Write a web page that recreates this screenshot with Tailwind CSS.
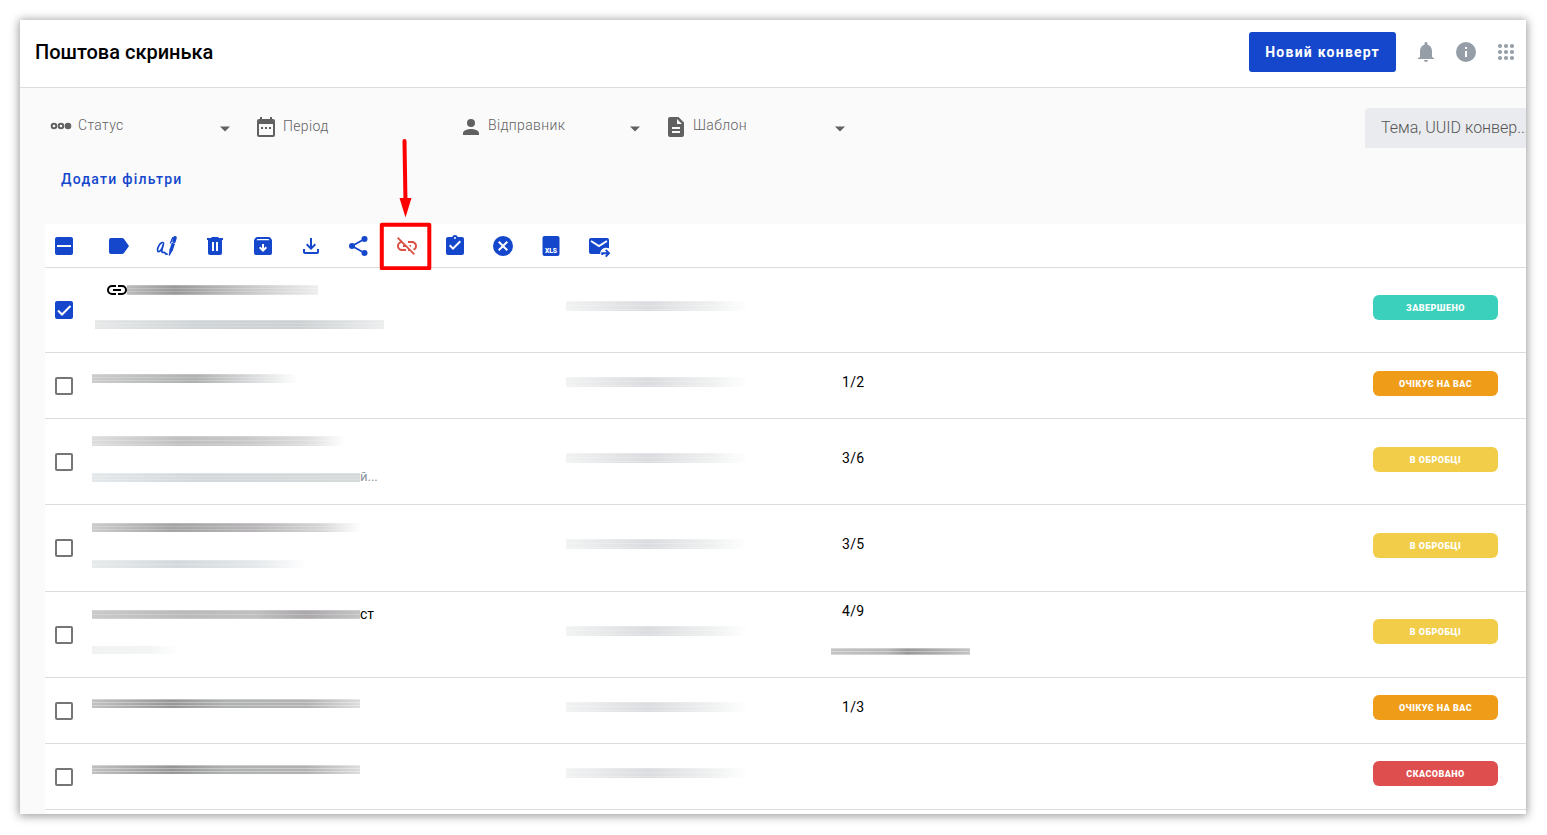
<!DOCTYPE html>
<html lang="uk">
<head>
<meta charset="utf-8">
<meta name="viewport" content="width=device-width, initial-scale=1">
<title>Поштова скринька</title>
<script src="https://cdn.jsdelivr.net/npm/@tailwindcss/browser@4"></script>
</head>
<body class="flex min-h-screen bg-white pt-5 pr-[21px] pb-[21px] pl-5 font-[Roboto,sans-serif] text-black">
<div class="flex min-w-0 flex-1 flex-col overflow-hidden bg-[#fafafa] shadow-[0_1px_9px_1px_rgba(0,0,0,0.4)]">

  <header class="flex h-17 items-center border-b border-[#dcdcdc] bg-white pr-2 pb-1 pl-[15px]">
    <h1 class="flex-1 text-xl font-medium">Поштова скринька</h1>
    <button type="button" class="mr-[18px] h-10 rounded-[3px] bg-[#1447cc] px-4 text-sm font-bold tracking-[1.25px] text-white">Новий конверт</button>
    <div class="flex gap-4 text-[#959ea7]">
      <button type="button" aria-label="Сповіщення"><svg class="block size-6" viewBox="0 0 24 24" fill="currentColor"><path d="M12 22c1.1 0 2-.9 2-2h-4c0 1.1.9 2 2 2zm6-5v-6c0-3.07-1.63-5.64-4.5-6.32V3.5c0-.83-.67-1.5-1.5-1.5s-1.5.67-1.5 1.5v1.18C7.64 5.36 6 7.92 6 11v6l-2 1v1h16v-1z"/></svg></button>
      <button type="button" aria-label="Інформація"><svg class="block size-6" viewBox="0 0 24 24" fill="currentColor"><path d="M12 2a10 10 0 1 0 0 20 10 10 0 0 0 0-20zm1 15h-2v-6h2zm0-8h-2V7h2z"/></svg></button>
      <button type="button" aria-label="Застосунки"><svg class="block size-6" viewBox="0 0 24 24" fill="currentColor"><circle cx="6" cy="6" r="2.1"/><circle cx="12" cy="6" r="2.1"/><circle cx="18" cy="6" r="2.1"/><circle cx="6" cy="12" r="2.1"/><circle cx="12" cy="12" r="2.1"/><circle cx="18" cy="12" r="2.1"/><circle cx="6" cy="18" r="2.1"/><circle cx="12" cy="18" r="2.1"/><circle cx="18" cy="18" r="2.1"/></svg></button>
    </div>
  </header>

  <main class="flex flex-1 flex-col pl-[25px]">
    <div class="flex items-center justify-between pt-5 pl-1">
      <div class="flex gap-[17px] text-sm font-light tracking-wide text-[#616161]">
        <div class="relative flex w-47 items-center gap-[5px]">
          <svg class="size-6 shrink-0" viewBox="0 0 24 24" fill="none" stroke="currentColor" stroke-width="2"><circle cx="5" cy="10" r="2.3"/><circle cx="12" cy="10" r="2.3"/><circle cx="19" cy="10" r="2.3" fill="currentColor"/></svg>
          <select aria-label="Статус" class="w-full appearance-none bg-transparent pb-1.5 outline-none"><option>Статус</option></select>
          <svg class="pointer-events-none absolute right-0 size-6" viewBox="0 0 24 24" fill="currentColor"><path d="M7 10.5l5 5 5-5z"/></svg>
        </div>
        <div class="flex w-47 items-center gap-[5px]">
          <svg class="size-6 shrink-0" viewBox="0 0 24 24" fill="currentColor"><path fill-rule="evenodd" d="M5 3h1V1h2v2h8V1h2v2h1a2 2 0 0 1 2 2v14a2 2 0 0 1-2 2H5a2 2 0 0 1-2-2V5a2 2 0 0 1 2-2zm0 5v11h14V8zM7 11h2v2H7zm4 0h2v2h-2zm4 0h2v2h-2z"/></svg>
          <input type="text" aria-label="Період" placeholder="Період" class="w-full min-w-0 bg-transparent pb-1 outline-none placeholder:text-[#616161]">
        </div>
        <div class="relative flex w-47 items-center gap-[5px]">
          <svg class="size-6 shrink-0" viewBox="0 0 24 24" fill="currentColor"><path d="M12 11a4 4 0 1 0 0-8 4 4 0 0 0 0 8zm0 2c-2.67 0-8 1.3-8 4v2h16v-2c0-2.7-5.33-4-8-4z"/></svg>
          <select aria-label="Відправник" class="w-full appearance-none bg-transparent pb-1.5 outline-none"><option>Відправник</option></select>
          <svg class="pointer-events-none absolute right-0 size-6" viewBox="0 0 24 24" fill="currentColor"><path d="M7 10.5l5 5 5-5z"/></svg>
        </div>
        <div class="relative flex w-47 items-center gap-[5px]">
          <svg class="size-6 shrink-0" viewBox="0 0 24 24" fill="currentColor"><path fill-rule="evenodd" d="M6 1h8.500l5.500 5.500V19a2 2 0 0 1-2 2H6a2 2 0 0 1-2-2V3a2 2 0 0 1 2-2zm2 10v2h8v-2zm0 4v2h8v-2zm5-12v5h5z"/></svg>
          <select aria-label="Шаблон" class="w-full appearance-none bg-transparent pb-1.5 outline-none"><option>Шаблон</option></select>
          <svg class="pointer-events-none absolute right-0 size-6" viewBox="0 0 24 24" fill="currentColor"><path d="M7 10.5l5 5 5-5z"/></svg>
        </div>
      </div>
      <input type="search" aria-label="Пошук" placeholder="Тема, UUID конвер..." class="-mr-5 h-10 w-[181px] rounded-t bg-[#e9ebee] pb-0.5 pl-4 text-base font-light outline-none placeholder:text-[#555]">
    </div>

    <div class="flex h-19 items-center pb-3.5 pl-4">
      <button type="button" class="text-sm font-medium tracking-[1.25px] text-[#1447cc]">Додати фільтри</button>
    </div>

    <section class="flex-1 rounded-tl bg-white">
      <div class="flex h-11 items-center border-b border-[#dcdcdc] pl-2.5 text-[#1447cc]">
        <label class="relative mr-[34px] block size-4.5">
          <input type="checkbox" aria-label="Вибрати всі" class="block size-4.5 appearance-none rounded-xs bg-[#1447cc]">
          <svg class="pointer-events-none absolute inset-0 size-4.5" viewBox="0 0 18 18" stroke="#fff" stroke-width="2"><path d="M2 9h14"/></svg>
        </label>
        <div class="flex gap-6">
          <button type="button" aria-label="Мітка"><svg class="block size-6" viewBox="0 0 24 24" fill="currentColor"><path d="M4 4h11c.8 0 1.500.3 2 1l5 7-5 7c-.5.700-1.200 1-2 1H4a2 2 0 0 1-2-2V6a2 2 0 0 1 2-2z"/></svg></button>
          <button type="button" aria-label="Підписати"><svg class="block size-6" viewBox="0 0 24 24" fill="none" stroke="currentColor" stroke-linecap="round"><path stroke-width="1.700" stroke-linejoin="round" d="M8.600 9.300C8 7.500 5.400 8.800 3.800 11.800c-1.400 2.600-1.800 5.600-.3 5.800 1.600.1 3.700-3 4.900-7-.9 2.900-2 6.400-1.400 7.600.5.900 1.700-.4 2.500.2.700.6.600 1.700 2.600 1.800"/><path stroke-width="3.600" d="M20 3.800l-1 3.400"/><path stroke-width="3.400" stroke-linecap="butt" d="M18.400 9.200l-2.400 7.300"/><path fill="currentColor" stroke="none" d="M14.500 15.500l3.100.9-3 5.400-.9-.3z"/><path stroke-width="1.300" d="M17.700 3.600l-2.200 5.400"/></svg></button>
          <button type="button" aria-label="Видалити"><svg class="block size-6" viewBox="0 0 24 24" fill="currentColor"><path fill-rule="evenodd" d="M9 3h6l1 1h4v2h-1v13a2 2 0 0 1-2 2H7a2 2 0 0 1-2-2V6H4V4h4zm0 5v9h2V8zm4 0v9h2V8z"/></svg></button>
          <button type="button" aria-label="Архівувати"><svg class="block size-6" viewBox="0 0 24 24"><path fill="currentColor" d="M6 3h12c.5 0 .9.200 1.200.600l1.300 1.600c.3.400.5.800.5 1.300V19a2 2 0 0 1-2 2H5a2 2 0 0 1-2-2V6.500c0-.5.200-.9.500-1.300l1.300-1.600C5.100 3.200 5.500 3 6 3z"/><path fill="#fff" d="M6.400 5h11.200l.9 1.200h-13zM11 10h2v4.200l1.600-1.600L16 14l-4 4-4-4 1.400-1.400 1.600 1.600z"/></svg></button>
          <button type="button" aria-label="Завантажити"><svg class="block size-6" viewBox="0 0 24 24" fill="currentColor"><path d="M12 16l-5-5 1.400-1.450L11 12.150V4h2v8.150l2.600-2.600L17 11zM6 20a2 2 0 0 1-2-2v-3h2v3h12v-3h2v3a2 2 0 0 1-2 2z"/></svg></button>
          <button type="button" aria-label="Поділитися"><svg class="block size-6" viewBox="0 0 24 24" fill="currentColor"><path fill="none" stroke="currentColor" stroke-width="1.800" d="M17.500 5L5 12l12.500 7"/><circle cx="5" cy="12" r="3"/><circle cx="17.500" cy="5" r="3"/><circle cx="17.500" cy="19" r="3"/></svg></button>
          <div class="relative">
            <button type="button" aria-label="Від’єднати" class="block text-[#dd5144]"><svg class="block size-6" viewBox="0 0 24 24" fill="currentColor"><path d="M17 7h-4v1.900h4c1.710 0 3.100 1.390 3.100 3.100 0 1.430-.98 2.630-2.310 2.980l1.460 1.460C20.880 15.610 22 13.950 22 12c0-2.760-2.240-5-5-5zm-1 4h-2.190l2 2H16zM2 4.270l3.110 3.110C3.290 8.120 2 9.910 2 12c0 2.760 2.240 5 5 5h4v-1.900H7c-1.710 0-3.100-1.390-3.100-3.100 0-1.590 1.210-2.900 2.760-3.070L8.730 11H8v2h2.730L13 15.270V17h1.730l4.010 4L20 19.740 3.270 3z"/></svg></button>
            <svg class="pointer-events-none absolute -top-24 -left-4 h-33 w-14" viewBox="0 0 56 132" fill="none" stroke="#f00" aria-hidden="true"><rect x="2.800" y="86.800" width="47.500" height="43.500" stroke-width="4" stroke-linejoin="round"/><path stroke-width="4" stroke-linecap="round" d="M25.500 3l1 62"/><path fill="#f00" stroke="none" d="M20.500 60h12L26.500 79.500z"/></svg>
          </div>
          <button type="button" aria-label="Завдання виконано"><svg class="block size-6" viewBox="0 0 24 24" fill="currentColor"><path d="M19 3h-4.180C14.400 1.840 13.300 1 12 1s-2.400.84-2.820 2H5a2 2 0 0 0-2 2v14c0 1.100.9 2 2 2h14a2 2 0 0 0 2-2V5a2 2 0 0 0-2-2zm-7 0a1 1 0 1 1 0 2 1 1 0 0 1 0-2zm-2 13l-4-4 1.410-1.410L10 13.170l6.590-6.590L18 8z"/></svg></button>
          <button type="button" aria-label="Скасувати"><svg class="block size-6" viewBox="0 0 24 24" fill="currentColor"><path d="M12 2a10 10 0 1 0 0 20 10 10 0 0 0 0-20zm5 13.590L15.590 17 12 13.410 8.410 17 7 15.590 10.590 12 7 8.410 8.410 7 12 10.590 15.590 7 17 8.410 13.410 12z"/></svg></button>
          <button type="button" aria-label="Експорт XLS"><svg class="block size-6" viewBox="0 0 24 24" fill="currentColor"><rect x="3.500" y="2" width="17" height="20" rx="2"/><text x="12" y="18.700" text-anchor="middle" fill="#fff" font-family="Roboto" font-size="6.700" font-weight="900">XLS</text></svg></button>
          <button type="button" aria-label="Переслати"><svg class="block size-6" viewBox="0 0 24 24" fill="currentColor"><path d="M4 4h16a2 2 0 0 1 2 2v8.300c-4.500-2-9 1-8.800 5.700H4a2 2 0 0 1-2-2V6c0-1.100.9-2 2-2z"/><path fill="none" stroke="#fff" stroke-width="2" d="M4 7l8 5 8-5"/><path fill="none" stroke="currentColor" stroke-width="1.900" d="M15.200 21v-1.800h6.300M18.700 15.800l3.300 3.400-3.300 3.400"/></svg></button>
        </div>
      </div>

      <table class="w-full table-fixed border-separate border-spacing-0 text-sm">
        <colgroup><col class="w-[47px]"><col class="w-[474px]"><col class="w-[276px]"><col><col class="w-[153px]"></colgroup>
        <tbody class="[&_td]:border-b [&_td]:border-[#dcdcdc] [&_td]:p-0">
          <tr class="h-[85px]">
            <td><label class="relative ml-2.5 block size-4.5"><input type="checkbox" checked aria-label="Вибрати конверт 1" class="peer block size-4.5 appearance-none rounded-xs border-2 border-[#757575] checked:border-[#1447cc] checked:bg-[#1447cc]"><svg class="pointer-events-none absolute inset-0 hidden size-4.5 peer-checked:block" viewBox="0 0 18 18" fill="none" stroke="#fff" stroke-width="2"><path d="M3 9.500l4 4L15.500 5"/></svg></label></td>
            <td><div class="flex flex-col gap-4 pb-2">
              <div class="flex h-5 items-center pl-[15px]"><svg class="h-2.5 w-5" viewBox="0 0 20 10" fill="none" stroke="#000" stroke-width="2"><path d="M9 1H5a4 4 0 0 0 0 8h4M11 1h4a4 4 0 0 1 0 8h-4M6 5h8"/></svg><span class="h-2.5 w-[191px] bg-[repeating-linear-gradient(180deg,#fff3_0_1px,#fff0_1px_3px),linear-gradient(90deg,#bbb,#999_25%,#c4c4c4_60%,#eee)]"></span></div>
              <div class="flex h-4 items-center pl-[3px]"><span class="h-[9px] w-[289px] bg-[repeating-linear-gradient(180deg,#fff3_0_1px,#fff0_1px_3px),linear-gradient(90deg,#e6e8e8,#cfd4d6_35%,#ccd0d2_70%,#eceeee)]"></span></div>
            </div></td>
            <td><div class="pb-2"><div class="h-2.5 w-[182px] bg-[repeating-linear-gradient(180deg,#fff3_0_1px,#fff0_1px_4px),linear-gradient(90deg,#f1f3f3,#dadcdf_45%,#eff1f1_80%,#fff)]"></div></div></td>
            <td></td>
            <td><div class="pb-[5px]"><div class="h-[25px] w-[125px] rounded-md bg-[#3bd0bb] text-center text-[9px] leading-[27px] font-black tracking-wider text-white">ЗАВЕРШЕНО</div></div></td>
          </tr>
          <tr class="h-[66px]">
            <td><input type="checkbox" aria-label="Вибрати конверт 2" class="ml-2.5 block size-4.5 appearance-none rounded-xs border-2 border-[#757575] checked:bg-[#1447cc]"></td>
            <td><div class="flex h-5 items-center"><span class="mb-3.5 h-[9px] w-[206px] bg-[repeating-linear-gradient(180deg,#fff3_0_1px,#fff0_1px_3px),linear-gradient(90deg,#ccc,#afb1b1_50%,#dcdfdf_80%,#fff)]"></span></div></td>
            <td><div class="pb-2"><div class="h-2.5 w-[182px] bg-[repeating-linear-gradient(180deg,#fff3_0_1px,#fff0_1px_4px),linear-gradient(90deg,#f1f3f3,#dadcdf_45%,#eff1f1_80%,#fff)]"></div></div></td>
            <td class="tracking-wide"><div class="pb-[7px]">1/2</div></td>
            <td><div class="pb-[5px]"><div class="h-[25px] w-[125px] rounded-md bg-[#ef9d19] text-center text-[9px] leading-[27px] font-black tracking-wider text-white">ОЧІКУЄ НА ВАС</div></div></td>
          </tr>
          <tr class="h-[86px]">
            <td><input type="checkbox" aria-label="Вибрати конверт 3" class="ml-2.5 block size-4.5 appearance-none rounded-xs border-2 border-[#757575] checked:bg-[#1447cc]"></td>
            <td><div class="flex flex-col gap-4 pb-[5px]">
              <div class="flex h-5 items-center"><span class="h-2.5 w-[253px] bg-[repeating-linear-gradient(180deg,#fff3_0_1px,#fff0_1px_4px),linear-gradient(90deg,#dedede,#c0c0c0_35%,#c8c8c8_60%,#dedede_85%,#fff)]"></span></div>
              <div class="flex h-5 items-center text-[13px] text-[#8b949c]"><span class="h-[9px] w-[268px] bg-[repeating-linear-gradient(180deg,#fff3_0_1px,#fff0_1px_3px),linear-gradient(90deg,#e4e8ea,#d2d7da_40%,#d6dadb)]"></span>й...</div>
            </div></td>
            <td><div class="pb-2"><div class="h-2.5 w-[182px] bg-[repeating-linear-gradient(180deg,#fff3_0_1px,#fff0_1px_4px),linear-gradient(90deg,#f1f3f3,#dadcdf_45%,#eff1f1_80%,#fff)]"></div></div></td>
            <td class="tracking-wide"><div class="pb-[7px]">3/6</div></td>
            <td><div class="pb-[5px]"><div class="h-[25px] w-[125px] rounded-md bg-[#f2cd49] text-center text-[9px] leading-[27px] font-black tracking-wider text-white">В ОБРОБЦІ</div></div></td>
          </tr>
          <tr class="h-[87px]">
            <td><input type="checkbox" aria-label="Вибрати конверт 4" class="ml-2.5 block size-4.5 appearance-none rounded-xs border-2 border-[#757575] checked:bg-[#1447cc]"></td>
            <td><div class="flex flex-col gap-4 pb-[5px]">
              <div class="flex h-5 items-center"><span class="h-[9px] w-[269px] bg-[repeating-linear-gradient(180deg,#fff3_0_1px,#fff0_1px_3px),linear-gradient(90deg,#ccc,#a4a4a4_30%,#b8b5b8_60%,#d6d6d6_85%,#fff)]"></span></div>
              <div class="flex h-5 items-center"><span class="h-2 w-[215px] bg-[repeating-linear-gradient(180deg,#fff3_0_1px,#fff0_1px_4px),linear-gradient(90deg,#e8ebec,#d3d9dc_40%,#e4e8ea_75%,#fff)]"></span></div>
            </div></td>
            <td><div class="pb-2"><div class="h-2.5 w-[182px] bg-[repeating-linear-gradient(180deg,#fff3_0_1px,#fff0_1px_4px),linear-gradient(90deg,#f1f3f3,#dadcdf_45%,#eff1f1_80%,#fff)]"></div></div></td>
            <td class="tracking-wide"><div class="pb-2">3/5</div></td>
            <td><div class="pb-[5px]"><div class="h-[25px] w-[125px] rounded-md bg-[#f2cd49] text-center text-[9px] leading-[27px] font-black tracking-wider text-white">В ОБРОБЦІ</div></div></td>
          </tr>
          <tr class="h-[86px]">
            <td><input type="checkbox" aria-label="Вибрати конверт 5" class="ml-2.5 block size-4.5 appearance-none rounded-xs border-2 border-[#757575] checked:bg-[#1447cc]"></td>
            <td><div class="flex flex-col gap-4 pb-[5px]">
              <div class="flex h-5 items-center text-sm"><span class="h-[9px] w-[268px] bg-[repeating-linear-gradient(180deg,#fff3_0_1px,#fff0_1px_4px),linear-gradient(90deg,#cacaca,#bababa_35%,#c0c0c0_60%,#aca8ac_80%,#c4c4c4)]"></span>ст</div>
              <div class="flex h-5 items-center"><span class="h-2 w-22 bg-[linear-gradient(90deg,#f1f3f3,#f3f5f5_65%,#fff)]"></span></div>
            </div></td>
            <td><div class="pb-2"><div class="h-2.5 w-[182px] bg-[repeating-linear-gradient(180deg,#fff3_0_1px,#fff0_1px_4px),linear-gradient(90deg,#f1f3f3,#dadcdf_45%,#eff1f1_80%,#fff)]"></div></div></td>
            <td class="tracking-wide"><div class="flex flex-col gap-[27px] pb-3.5"><span>4/9</span><span class="-ml-[11px] h-[7px] w-[139px] bg-[repeating-linear-gradient(180deg,#fff5_0_1px,#fff0_1px_3px),linear-gradient(90deg,#c4c4c4,#b8b8b8_40%,#999_55%,#c4c4c4)]"></span></div></td>
            <td><div class="pb-1.5"><div class="h-[25px] w-[125px] rounded-md bg-[#f2cd49] text-center text-[9px] leading-[27px] font-black tracking-wider text-white">В ОБРОБЦІ</div></div></td>
          </tr>
          <tr class="h-[66px]">
            <td><input type="checkbox" aria-label="Вибрати конверт 6" class="ml-2.5 block size-4.5 appearance-none rounded-xs border-2 border-[#757575] checked:bg-[#1447cc]"></td>
            <td><div class="flex h-5 items-center"><span class="mb-3.5 h-[9px] w-[268px] bg-[repeating-linear-gradient(180deg,#fff5_0_1px,#fff0_1px_3px),linear-gradient(90deg,#c0c0c0,#969696_30%,#b0b2b2_50%,#b2b2b2_80%,#ddd)]"></span></div></td>
            <td><div class="pb-2"><div class="h-2.5 w-[182px] bg-[repeating-linear-gradient(180deg,#fff3_0_1px,#fff0_1px_4px),linear-gradient(90deg,#f1f3f3,#dadcdf_45%,#eff1f1_80%,#fff)]"></div></div></td>
            <td class="tracking-wide"><div class="pb-[7px]">1/3</div></td>
            <td><div class="pb-1.5"><div class="h-[25px] w-[125px] rounded-md bg-[#ef9d19] text-center text-[9px] leading-[27px] font-black tracking-wider text-white">ОЧІКУЄ НА ВАС</div></div></td>
          </tr>
          <tr class="h-[66px]">
            <td><input type="checkbox" aria-label="Вибрати конверт 7" class="ml-2.5 block size-4.5 appearance-none rounded-xs border-2 border-[#757575] checked:bg-[#1447cc]"></td>
            <td><div class="flex h-5 items-center"><span class="mb-3.5 h-[9px] w-[268px] bg-[repeating-linear-gradient(180deg,#fff5_0_1px,#fff0_1px_3px),linear-gradient(90deg,#c0c0c0,#969696_30%,#b0b2b2_50%,#b2b2b2_80%,#ddd)]"></span></div></td>
            <td><div class="pb-2"><div class="h-2.5 w-[182px] bg-[repeating-linear-gradient(180deg,#fff3_0_1px,#fff0_1px_4px),linear-gradient(90deg,#f1f3f3,#dadcdf_45%,#eff1f1_80%,#fff)]"></div></div></td>
            <td></td>
            <td><div class="pb-1.5"><div class="h-[25px] w-[125px] rounded-md bg-[#df4e4e] text-center text-[9px] leading-[27px] font-black tracking-wider text-white">СКАСОВАНО</div></div></td>
          </tr>
        </tbody>
      </table>
    </section>
  </main>
</div>
</body>
</html>
